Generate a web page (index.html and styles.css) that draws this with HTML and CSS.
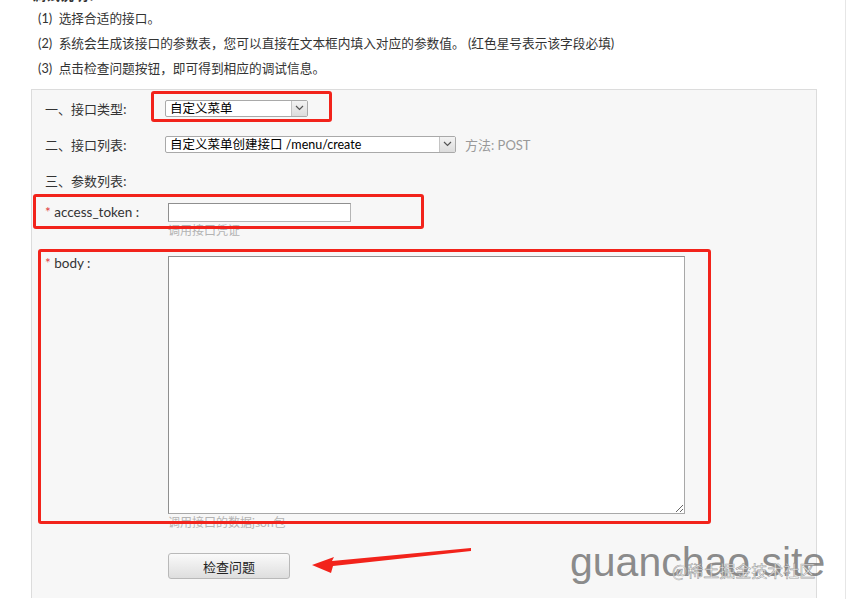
FILE: index.html
```html
<!DOCTYPE html>
<html lang="zh-CN">
<head>
  <meta charset="UTF-8" />
  <meta name="viewport" content="width=device-width, initial-scale=1.0" />
  <title>接口调试</title>
  <link rel="stylesheet" href="styles.css">
</head>
<body>

  <div class="page">
    <h4 class="page-title">调试说明：</h4>
    <ul class="steps">
      <li>(1)&nbsp; 选择合适的接口。</li>
      <li>(2)&nbsp; 系统会生成该接口的参数表，您可以直接在文本框内填入对应的参数值。 (红色星号表示该字段必填)</li>
      <li>(3)&nbsp; 点击检查问题按钮，即可得到相应的调试信息。</li>
    </ul>

    <div class="panel">
      <div class="row">
        <div class="label">一、接口类型:</div>
        <div class="control">
          <div class="select short">
            <span class="select-text">自定义菜单</span>
            <span class="select-arrow">
              <svg width="9" height="6" viewBox="0 0 9 6"><path d="M1 1l3.5 3.5L8 1" fill="none" stroke="#555" stroke-width="1.2"/></svg>
            </span>
          </div>
        </div>
      </div>

      <div class="row">
        <div class="label">二、接口列表:</div>
        <div class="control">
          <div class="select long">
            <span class="select-text">自定义菜单创建接口 /menu/create</span>
            <span class="select-arrow">
              <svg width="9" height="6" viewBox="0 0 9 6"><path d="M1 1l3.5 3.5L8 1" fill="none" stroke="#555" stroke-width="1.2"/></svg>
            </span>
          </div>
          <span class="method">方法: POST</span>
        </div>
      </div>

      <div class="row">
        <div class="label">三、参数列表:</div>
      </div>

      <div class="field token">
        <div class="label en"><span class="star">*</span> access_token :</div>
        <div class="control-col">
          <input class="text-input" type="text">
          <div class="hint">调用接口凭证</div>
        </div>
      </div>

      <div class="field body-field">
        <div class="label en"><span class="star">*</span> body :</div>
        <div class="control-col">
          <textarea class="text-area"></textarea>
          <div class="hint">调用接口的数据json包</div>
          <button class="check-btn">检查问题</button>
        </div>
      </div>
    </div>

    <!-- annotations drawn over the screenshot -->
    <div class="mark mark-type"></div>
    <div class="mark mark-token"></div>
    <div class="mark mark-body"></div>
    <svg class="arrow" width="164" height="32" viewBox="0 0 164 32">
      <polygon points="2,20 24,12 22,16 161,3 161,6 23,21 21,28" fill="#f2231b"/>
    </svg>
    <div class="wm-site">guanchao.site</div>
    <div class="wm-juejin">@稀土掘金技术社区</div>
  </div>

</body>
</html>
```

FILE: styles.css
```css
html, body {
  margin: 0;
  padding: 0;
  overflow: hidden;
  background: #fff;
}
body {
  font-family: "Lato", "Noto Sans CJK SC", sans-serif;
  font-size: 13px;
  color: #333;
}
.page {
  display: flow-root;
  position: relative;
  width: 846px;
  height: 599px;
  border-right: 1px solid #e6e6e6;
  padding-left: 31px;
  box-sizing: border-box;
}
.page-title {
  margin: -15px 0 0 1px;
  font-family: "Noto Sans CJK SC", sans-serif;
  font-size: 14px;
  line-height: 18px;
  font-weight: bold;
}
.steps {
  list-style: none;
  margin: 3px 0 0;
  padding: 0 0 0 7px;
}
.steps li {
  line-height: 25px;
  font-family: "Lato", "Noto Sans CJK SC", sans-serif;
  font-size: 12.7px;
}
.panel {
  margin-top: 8px;
  width: 786px;
  height: 509px;
  box-sizing: border-box;
  background: #f7f7f7;
  border: 1px solid #dcdcdc;
  border-bottom: none;
  padding-left: 13px;
}
.row {
  display: grid;
  grid-template-columns: 123px 1fr;
  align-items: center;
  height: 36px;
}
.label {
  font-family: "Noto Sans CJK SC", sans-serif;
  font-size: 13px;
  color: #333;
}
.label.en {
  font-family: "Lato", "Noto Sans CJK SC", sans-serif;
  font-size: 13.5px;
}
.control {
  display: flex;
  align-items: center;
  gap: 9px;
}
.select {
  display: flex;
  align-items: center;
  justify-content: space-between;
  height: 17px;
  margin-left: -3px;
  box-sizing: border-box;
  border: 1px solid #a9a9a9;
  border-radius: 2px;
  background: #fff;
  font-family: "Lato", "Noto Sans CJK SC", sans-serif;
  font-size: 12.5px;
  color: #000;
}
.select.short { width: 143px; }
.select.long { width: 291px; }
.select-text {
  padding-left: 4px;
  line-height: 15px;
}
.select-arrow {
  display: flex;
  align-items: center;
  justify-content: center;
  width: 16px;
  height: 15px;
  box-sizing: border-box;
  border-left: 1px solid #c4c4c4;
  background: linear-gradient(#f3f3f3, #dcdcdc);
}
.method {
  color: #999;
  font-family: "Lato", "Noto Sans CJK SC", sans-serif;
  font-size: 13px;
}
.field {
  display: grid;
  grid-template-columns: 123px 1fr;
  align-items: start;
}
.token {
  margin-top: 5px;
}
.token .label {
  line-height: 19px;
}
.body-field {
  margin-top: 17px;
}
.body-field .label {
  line-height: 15px;
}
.control-col {
  display: flex;
  flex-direction: column;
  align-items: flex-start;
}
.text-input {
  width: 183px;
  height: 19px;
  margin: 0;
  padding: 0 3px;
  box-sizing: border-box;
  border: 1px solid #8f8f8f;
  border-right-color: #b5b5b5;
  border-bottom-color: #b5b5b5;
  background: #fff;
}
.text-area {
  display: block;
  width: 517px;
  height: 258px;
  margin: 0;
  box-sizing: border-box;
  border: 1px solid #8f8f8f;
  border-right-color: #a8a8a8;
  border-bottom-color: #a8a8a8;
  background: #fff;
}
.hint {
  font-family: "Lato", "Noto Sans CJK SC", sans-serif;
  font-size: 12px;
  line-height: 17px;
  color: #b3b3b3;
}
.check-btn {
  margin-top: 22px;
  width: 122px;
  height: 26px;
  border: 1px solid #b9b9b9;
  border-radius: 3px;
  background: linear-gradient(#fafafa, #dedede);
  font-family: "Noto Sans CJK SC", sans-serif;
  font-size: 13px;
  color: #222;
}
.star {
  color: #e0393e;
}
.mark {
  position: absolute;
  box-sizing: border-box;
  border: 3px solid #f2231b;
  border-radius: 3px;
}
.mark-type { left: 151px; top: 91px; width: 181px; height: 31px; }
.mark-token { left: 33px; top: 194px; width: 391px; height: 35px; }
.mark-body { left: 38px; top: 249px; width: 673px; height: 275px; }
.arrow {
  position: absolute;
  left: 310px;
  top: 545px;
}
.wm-site {
  position: absolute;
  left: 570px;
  top: 542px;
  font-family: "Liberation Sans", sans-serif;
  font-size: 41px;
  line-height: 41px;
  color: rgba(110, 110, 110, 0.8);
}
.wm-juejin {
  position: absolute;
  left: 672px;
  top: 560px;
  font-family: "Noto Sans CJK SC", sans-serif;
  font-size: 16px;
  line-height: 20px;
  color: rgba(255, 255, 255, 0.9);
  -webkit-text-stroke: 0.6px rgba(120, 120, 120, 0.7);
}
```
